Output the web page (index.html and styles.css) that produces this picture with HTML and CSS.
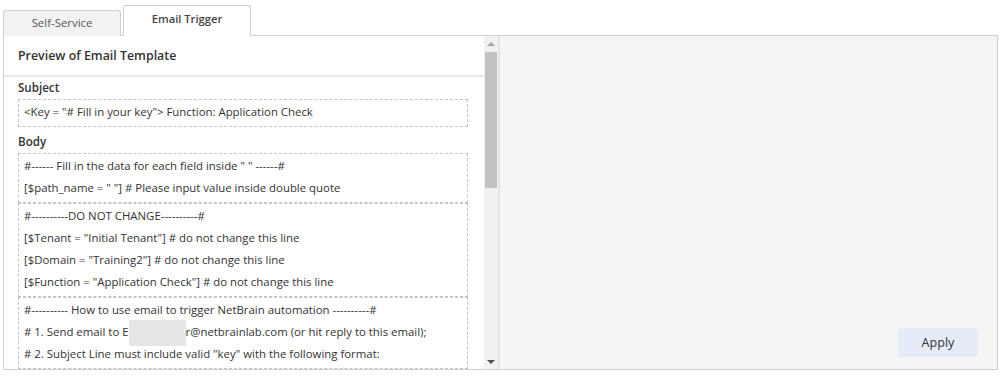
FILE: index.html
```html
<!DOCTYPE html>
<html lang="en">
<head>
    <meta charset="UTF-8">
    <title>Email Trigger</title>
    <link rel="stylesheet" href="styles.css">
</head>
<body>
    <div class="tabs">
        <div class="tab">Self-Service</div>
        <div class="tab active">Email Trigger</div>
    </div>

    <div class="panel">
        <!-- Preview column -->
        <div class="preview">
            <div class="preview-header">Preview of Email Template</div>
            <div class="preview-body">
                <div class="field-label">Subject</div>
                <div class="box">
                    <div class="line">&lt;Key = "# Fill in your key"&gt; Function: Application Check</div>
                </div>

                <div class="field-label body-label">Body</div>
                <div class="box">
                    <div class="line">#------ Fill in the data for each field inside " " ------#</div>
                    <div class="line">[$path_name = " "] # Please input value inside double quote</div>
                </div>
                <div class="box">
                    <div class="line">#----------DO NOT CHANGE----------#</div>
                    <div class="line">[$Tenant = "Initial Tenant"] # do not change this line</div>
                    <div class="line">[$Domain = "Training2"] # do not change this line</div>
                    <div class="line">[$Function = "Application Check"] # do not change this line</div>
                </div>
                <div class="box">
                    <div class="line">#---------- How to use email to trigger NetBrain automation ----------#</div>
                    <div class="line"># 1. Send email to E<span class="redact"></span>r@netbrainlab.com (or hit reply to this email);</div>
                    <div class="line"># 2. Subject Line must include valid "key" with the following format:</div>
                </div>
            </div>
        </div>

        <!-- Fake scrollbar -->
        <div class="scrollbar">
            <div class="arrow up"></div>
            <div class="track">
                <div class="thumb"></div>
            </div>
            <div class="arrow down"></div>
        </div>

        <!-- Right side -->
        <div class="side">
            <button class="apply">Apply</button>
        </div>
    </div>
</body>
</html>
```

FILE: styles.css
```css
body {
    margin: 0;
    font-family: "Open Sans", "Liberation Sans", sans-serif;
    font-size: 11.4px;
    color: #333;
    background-color: #fff;
}
.tabs {
    display: flex;
    align-items: flex-end;
    height: 35px;
    padding-left: 3px;
}
.tab {
    box-sizing: border-box;
    width: 118px;
    height: 26px;
    line-height: 24px;
    text-align: center;
    color: #555;
    background-color: #f2f2f2;
    border: 1px solid #cfcfcf;
    border-bottom: none;
    border-radius: 3px 3px 0 0;
    margin-bottom: -1px;
}
.tab.active {
    width: 128px;
    height: 31px;
    line-height: 26px;
    margin-left: 2px;
    background-color: #fff;
    color: #444;
    font-weight: 600;
    font-size: 11.2px;
    position: relative;
    z-index: 1;
}
.panel {
    display: flex;
    box-sizing: border-box;
    width: 995px;
    height: 335px;
    margin-left: 3px;
    border: 1px solid #cfcfcf;
    overflow: hidden;
}
.preview {
    width: 480px;
    overflow: hidden;
}
.preview-header {
    height: 39px;
    line-height: 39px;
    padding-left: 14px;
    font-size: 12.4px;
    font-weight: 600;
    color: #333;
    border-bottom: 2px solid #e9e9e9;
}
.preview-body {
    padding: 0 16px 0 14px;
}
.field-label {
    height: 22px;
    line-height: 21px;
    font-size: 11.6px;
    font-weight: 600;
    color: #333;
}
.body-label {
    margin-top: 4px;
}
.box {
    border: 1px dashed #c4c4c4;
    padding: 1px 5px 3px;
}
.line {
    height: 22px;
    line-height: 22px;
    white-space: nowrap;
}
.redact {
    display: inline-block;
    width: 57px;
    height: 26px;
    margin: -2px 0;
    vertical-align: middle;
    background-color: #e6e6e6;
}
.scrollbar {
    display: flex;
    flex-direction: column;
    width: 14px;
    background-color: #f1f1f1;
    border-right: 2px solid #e4e4e4;
}
.arrow {
    height: 15px;
    display: flex;
    align-items: center;
    justify-content: center;
}
.arrow::after {
    content: "";
    border-left: 4px solid transparent;
    border-right: 4px solid transparent;
}
.arrow.up::after {
    border-bottom: 4px solid #a3a3a3;
}
.arrow.down::after {
    border-top: 4px solid #505050;
}
.track {
    flex: 1;
    padding: 1px;
}
.thumb {
    height: 136px;
    background-color: #c1c1c1;
}
.side {
    flex: 1;
    display: flex;
    align-items: flex-end;
    justify-content: flex-end;
    padding: 0 19px 12px 0;
    background-color: #f5f5f5;
}
.apply {
    width: 80px;
    height: 29px;
    border: none;
    border-radius: 3px;
    background-color: #e5ecf8;
    color: #333;
    font-family: "Open Sans", "Liberation Sans", sans-serif;
    font-size: 12.6px;
}
```
